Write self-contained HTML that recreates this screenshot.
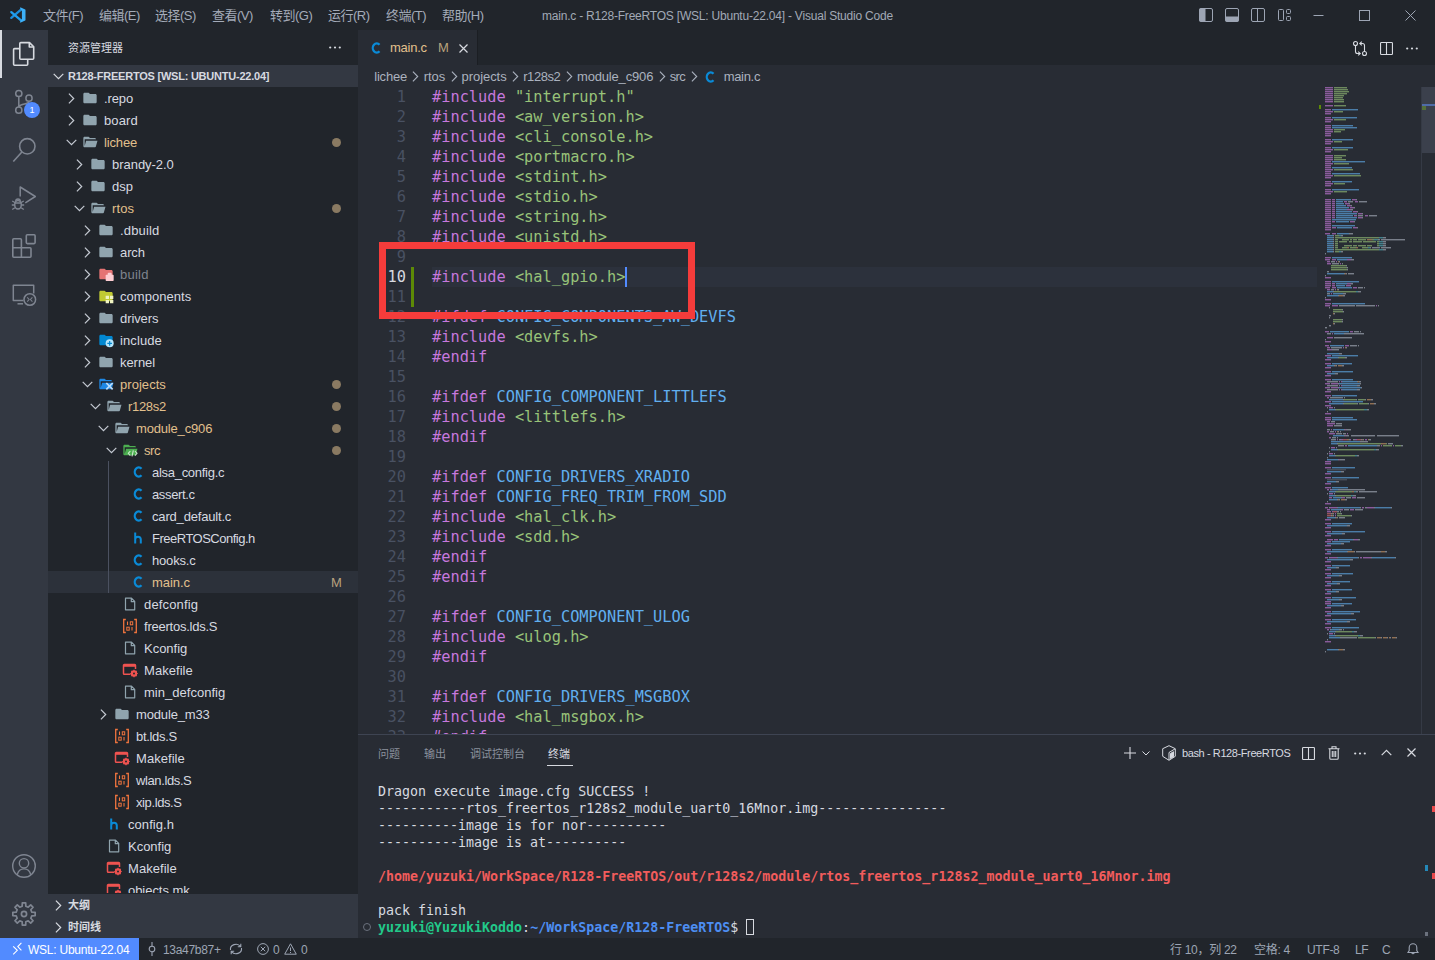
<!DOCTYPE html>
<html lang="zh-CN"><head><meta charset="utf-8"><title>main.c - R128-FreeRTOS [WSL: Ubuntu-22.04] - Visual Studio Code</title>
<style>
*{box-sizing:border-box;margin:0;padding:0}
html,body{width:1435px;height:960px;overflow:hidden;background:#282c34}
body{position:relative;font-family:"Liberation Sans","Noto Sans CJK SC",sans-serif;font-size:13px;color:#d7dae0;-webkit-font-smoothing:antialiased}
.abs{position:absolute}
svg{display:block;overflow:visible}
.ui{letter-spacing:-0.45px;white-space:nowrap}
.mono{font-family:"DejaVu Sans Mono","Liberation Mono",monospace;white-space:pre}
/* title bar */
#title{left:0;top:0;width:1435px;height:30px;background:#21252b;color:#9da5b4}
#title .m{position:absolute;top:0;height:30px;line-height:31px;font-size:13px;letter-spacing:-0.5px;white-space:nowrap;color:#a4abb9}
#title .t{position:absolute;top:0;height:30px;line-height:33px;font-size:12px;left:542px;letter-spacing:-0.21px;white-space:nowrap;color:#a2a9b6}
/* activity bar */
#act{left:0;top:30px;width:48px;height:908px;background:#333842}
/* sidebar */
#side{left:48px;top:30px;width:310px;height:908px;background:#21252b;overflow:hidden}
.row{position:absolute;left:0;width:310px;height:22px;line-height:22px;white-space:nowrap}
.row .lb{position:absolute;top:1px;letter-spacing:-0.45px;color:#d7dae0}
.row.mod .lb{color:#e2c08d}
.row.ign .lb{color:#7f848e}
.row .dot{position:absolute;left:284px;top:7px;width:9px;height:9px;border-radius:50%;background:#8a7a62}
.row svg{position:absolute}
/* editor */
#ed{left:358px;top:30px;width:1077px;height:704px;background:#282c34;overflow:hidden}
.ln{position:absolute;left:0;width:48px;text-align:right;height:20px;line-height:20px;color:#495162;font-size:15.3px}
.cl{position:absolute;left:74px;height:20px;line-height:20px;font-size:15.3px}
.k{color:#c678dd}.s{color:#98c379}.d{color:#61afef}
/* panel */
#panel{left:358px;top:734px;width:1077px;height:204px;background:#282c34;border-top:1px solid #3e4452;overflow:hidden}
.tl{position:absolute;left:20px;height:17px;line-height:19px;font-size:13.3px;color:#d7dae0}
/* status */
#status{left:0;top:938px;width:1435px;height:22px;background:#21252b;color:#9da5b4;font-size:12px}
#status .i{position:absolute;top:0;height:22px;line-height:24px;white-space:nowrap;letter-spacing:-0.3px}
</style></head><body>
<div id="title" class="abs">
<svg class="abs" style="left:10px;top:7px" width="16" height="16" viewBox="0 0 16 16"><path d="M11.300 2.300L1.300 10.900" stroke="#1b8fdc" stroke-width="2.300" stroke-linecap="round"/><path d="M11.300 13.700L1.300 5.100" stroke="#219ff0" stroke-width="2.300" stroke-linecap="round"/><path d="M10.800 0.500L15.200 2.600a.6.600 0 0 1 .3.500V12.900a.6.600 0 0 1-.3.500L10.800 15.500a.8.800 0 0 1-1-.3L11.900 12V4L9.800.8a.8.800 0 0 1 1-.3z" fill="#3db0f7"/></svg>
<div class="m" style="left:43px">文件(F)</div>
<div class="m" style="left:99px">编辑(E)</div>
<div class="m" style="left:155px">选择(S)</div>
<div class="m" style="left:212px">查看(V)</div>
<div class="m" style="left:270px">转到(G)</div>
<div class="m" style="left:328px">运行(R)</div>
<div class="m" style="left:386px">终端(T)</div>
<div class="m" style="left:442px">帮助(H)</div>
<div class="t">main.c - R128-FreeRTOS [WSL: Ubuntu-22.04] - Visual Studio Code</div>
<svg class="abs" style="left:1199px;top:8px" width="14" height="14" viewBox="0 0 14 14"><rect x="0.5" y="0.5" width="13" height="13" rx="1.5" fill="none" stroke="#9da5b4"/><rect x="0.5" y="0.5" width="6" height="13" fill="#9da5b4"/></svg>
<svg class="abs" style="left:1225px;top:8px" width="14" height="14" viewBox="0 0 14 14"><rect x="0.5" y="0.5" width="13" height="13" rx="1.5" fill="none" stroke="#9da5b4"/><rect x="0.5" y="8.5" width="13" height="5" fill="#9da5b4"/></svg>
<svg class="abs" style="left:1251px;top:8px" width="14" height="14" viewBox="0 0 14 14"><rect x="0.5" y="0.5" width="13" height="13" rx="1.5" fill="none" stroke="#9da5b4"/><path d="M6.5 0.5V13.5" stroke="#9da5b4"/></svg>
<svg class="abs" style="left:1278px;top:8px" width="14" height="14" viewBox="0 0 14 14"><rect x="0.5" y="1.5" width="5" height="11" rx="1" fill="none" stroke="#9da5b4"/><rect x="8.5" y="1.5" width="4" height="4" rx="1" fill="none" stroke="#9da5b4"/><rect x="8.5" y="8.5" width="4" height="4" rx="1" fill="none" stroke="#9da5b4"/></svg>
<svg class="abs" style="left:1313px;top:10px" width="11" height="11" viewBox="0 0 11 11"><path d="M0.5 5.5H10.5" stroke="#9da5b4" stroke-width="1"/></svg>
<svg class="abs" style="left:1359px;top:10px" width="11" height="11" viewBox="0 0 11 11"><rect x="0.5" y="0.5" width="10" height="10" fill="none" stroke="#9da5b4" stroke-width="1"/></svg>
<svg class="abs" style="left:1405px;top:10px" width="11" height="11" viewBox="0 0 11 11"><path d="M0.5 0.5L10.5 10.5M10.5 0.5L0.5 10.5" stroke="#9da5b4" stroke-width="1"/></svg>
</div>
<div id="act" class="abs">
<div class="abs" style="left:0;top:0;width:2px;height:48px;background:#d7dae0"></div>
<svg class="abs" style="left:0;top:0" width="48" height="908" viewBox="0 30 48 908" fill="none"><g stroke="#d7dae0" stroke-width="1.600" stroke-linejoin="round"><path d="M19.800 43.600a1 1 0 0 1 1-1H29.500l4.200 4.200V58.200a1 1 0 0 1-1 1H20.800a1 1 0 0 1-1-1Z"/><path d="M29.300 42.800V47h4.200"/><path d="M19.800 48.600H14.600a1 1 0 0 0-1 1V64.200a1 1 0 0 0 1 1H26.700a1 1 0 0 0 1-1V59.200"/></g><g stroke="#7f8591" stroke-width="1.500"><circle cx="18.800" cy="93.500" r="3.100"/><circle cx="18.800" cy="110.200" r="3.100"/><circle cx="29" cy="98.200" r="3.100"/><path d="M18.800 96.600V107.100M29 101.300c0 3.500-8 2-10.200 5.500"/></g><g stroke="#7f8591" stroke-width="1.600"><circle cx="27.300" cy="146.300" r="7.700"/><path d="M21.900 152L13.300 161.500"/></g><g stroke="#7f8591" stroke-width="1.500" stroke-linejoin="round"><path d="M20.200 196.500V187L35.300 196.500L25.300 202.800"/><ellipse cx="18" cy="204.800" rx="3.300" ry="4.300"/><path d="M12.200 201l2.700 1.500M11.800 205h2.900M12.200 209.500l2.700-1.800M23.800 201l-2.700 1.500M24.200 205h-2.900M23.800 209.500l-2.700-1.800M14.800 203h6.400M15.700 201.300a2.300 2.300 0 0 1 4.600 0" stroke-width="1.300"/></g><g stroke="#7f8591" stroke-width="1.600" stroke-linejoin="round"><path d="M13.800 238.800H20.400a1 1 0 0 1 1 1V247.800H30a1 1 0 0 1 1 1V256.200a1 1 0 0 1-1 1H13.800a1 1 0 0 1-1-1V239.800a1 1 0 0 1 1-1ZM12.800 247.800H21.400V257.200"/><rect x="26.300" y="234.800" width="8.800" height="8.800" rx="1"/></g><g stroke="#7f8591" stroke-width="1.500" stroke-linejoin="round"><path d="M23.500 300.500H13.300V285.300H33.700V293.500"/><path d="M17.500 303.800H23"/><circle cx="29.800" cy="299.500" r="5.800"/><path d="M27.200 297.300l2 2.200-2 2.200M32.400 297.300l-2 2.200 2 2.200" stroke-width="1.100"/></g><g stroke="#7f8591" stroke-width="1.400"><circle cx="24" cy="866" r="11.300"/><circle cx="24" cy="863.300" r="4.700"/><path d="M17.200 874.700c1-3.800 3.600-5.800 6.800-5.800s5.800 2 6.800 5.800"/></g><g stroke="#7f8591" stroke-width="1.700" stroke-linejoin="round"><path d="M22.31 902.83L25.69 902.83L25.82 906.21L28.22 907.20L30.71 904.91L33.09 907.29L30.80 909.78L31.79 912.18L35.17 912.31L35.17 915.69L31.79 915.82L30.80 918.22L33.09 920.71L30.71 923.09L28.22 920.80L25.82 921.79L25.69 925.17L22.31 925.17L22.18 921.79L19.78 920.80L17.29 923.09L14.91 920.71L17.20 918.22L16.21 915.82L12.83 915.69L12.83 912.31L16.21 912.18L17.20 909.78L14.91 907.29L17.29 904.91L19.78 907.20L22.18 906.21Z"/><circle cx="24" cy="914" r="2.600"/></g></svg>
<div class="abs" style="left:24px;top:72px;width:16px;height:16px;border-radius:8px;background:#528bff;color:#fff;font-size:9px;line-height:16px;text-align:center">1</div>
</div>
<div id="side" class="abs">
<div class="abs" style="left:20px;top:0;height:35px;line-height:37px;font-size:11px;color:#d7dae0;white-space:nowrap">资源管理器</div>
<svg class="abs" style="left:281px;top:16px" width="12" height="3" viewBox="0 0 12 3"><circle cx="1.200" cy="1.500" r="1.100" fill="#d7dae0"/><circle cx="6" cy="1.500" r="1.100" fill="#d7dae0"/><circle cx="10.800" cy="1.500" r="1.100" fill="#d7dae0"/></svg>
<div class="abs" style="left:0;top:35px;width:310px;height:22px;background:#333842"></div>
<svg class="abs" style="left:4.500px;top:42.500px" width="11" height="7" viewBox="0 0 11 7"><path d="M0.700 0.900L5.500 5.700L10.300 0.900" fill="none" stroke="#d7dae0" stroke-width="1.200"/></svg>
<div class="abs" style="left:20px;top:35px;height:22px;line-height:22px;font-size:11px;font-weight:bold;color:#d7dae0;white-space:nowrap;letter-spacing:-0.231px">R128-FREERTOS [WSL: UBUNTU-22.04]</div>
<div class="abs" style="left:0;top:57px;width:310px;height:806px;overflow:hidden">
<div class="row " style="top:0px">
<svg style="left:20px;top:5.5px" width="7" height="11" viewBox="0 0 7 11"><path d="M0.9 0.7L5.7 5.500L0.9 10.300" fill="none" stroke="#c5cad3" stroke-width="1.2"/></svg>
<svg style="left:34px;top:3px" width="16" height="16" viewBox="0 0 24 24"><path d="M10 4H4c-1.11 0-2 .89-2 2v12c0 1.1.9 2 2 2h16c1.1 0 2-.9 2-2V8c0-1.11-.9-2-2-2h-8l-2-2z" fill="#90a4ae"/></svg>
<span class="lb" style="left:56px;letter-spacing:-0.108px">.repo</span>
</div>
<div class="row " style="top:22px">
<svg style="left:20px;top:5.5px" width="7" height="11" viewBox="0 0 7 11"><path d="M0.9 0.7L5.7 5.500L0.9 10.300" fill="none" stroke="#c5cad3" stroke-width="1.2"/></svg>
<svg style="left:34px;top:3px" width="16" height="16" viewBox="0 0 24 24"><path d="M10 4H4c-1.11 0-2 .89-2 2v12c0 1.1.9 2 2 2h16c1.1 0 2-.9 2-2V8c0-1.11-.9-2-2-2h-8l-2-2z" fill="#90a4ae"/></svg>
<span class="lb" style="left:56px;letter-spacing:0.13px">board</span>
</div>
<div class="row mod" style="top:44px">
<svg style="left:17.5px;top:7.5px" width="11" height="7" viewBox="0 0 11 7"><path d="M0.7 0.9L5.5 5.7L10.3 0.9" fill="none" stroke="#c5cad3" stroke-width="1.2"/></svg>
<svg style="left:34px;top:3px" width="16" height="16" viewBox="0 0 24 24"><path d="M19 20H4c-1.11 0-2-.9-2-2V6c0-1.11.89-2 2-2h6l2 2h7c1.1 0 2 .9 2 2H4v10l2.14-8h17.07l-2.28 8.5c-.23.87-1.01 1.5-1.93 1.5z" fill="#90a4ae"/></svg>
<span class="lb" style="left:56px;letter-spacing:-0.145px">lichee</span>
<span class="dot"></span>
</div>
<div class="row " style="top:66px">
<svg style="left:28px;top:5.5px" width="7" height="11" viewBox="0 0 7 11"><path d="M0.9 0.7L5.7 5.500L0.9 10.300" fill="none" stroke="#c5cad3" stroke-width="1.2"/></svg>
<svg style="left:42px;top:3px" width="16" height="16" viewBox="0 0 24 24"><path d="M10 4H4c-1.11 0-2 .89-2 2v12c0 1.1.9 2 2 2h16c1.1 0 2-.9 2-2V8c0-1.11-.9-2-2-2h-8l-2-2z" fill="#90a4ae"/></svg>
<span class="lb" style="left:64px;letter-spacing:-0.036px">brandy-2.0</span>
</div>
<div class="row " style="top:88px">
<svg style="left:28px;top:5.5px" width="7" height="11" viewBox="0 0 7 11"><path d="M0.9 0.7L5.7 5.500L0.9 10.300" fill="none" stroke="#c5cad3" stroke-width="1.2"/></svg>
<svg style="left:42px;top:3px" width="16" height="16" viewBox="0 0 24 24"><path d="M10 4H4c-1.11 0-2 .89-2 2v12c0 1.1.9 2 2 2h16c1.1 0 2-.9 2-2V8c0-1.11-.9-2-2-2h-8l-2-2z" fill="#90a4ae"/></svg>
<span class="lb" style="left:64px;letter-spacing:-0.023px">dsp</span>
</div>
<div class="row mod" style="top:110px">
<svg style="left:25.5px;top:7.5px" width="11" height="7" viewBox="0 0 11 7"><path d="M0.7 0.9L5.5 5.7L10.3 0.9" fill="none" stroke="#c5cad3" stroke-width="1.2"/></svg>
<svg style="left:42px;top:3px" width="16" height="16" viewBox="0 0 24 24"><path d="M19 20H4c-1.11 0-2-.9-2-2V6c0-1.11.89-2 2-2h6l2 2h7c1.1 0 2 .9 2 2H4v10l2.14-8h17.07l-2.28 8.5c-.23.87-1.01 1.5-1.93 1.5z" fill="#90a4ae"/></svg>
<span class="lb" style="left:64px;letter-spacing:0.107px">rtos</span>
<span class="dot"></span>
</div>
<div class="row " style="top:132px">
<svg style="left:36px;top:5.5px" width="7" height="11" viewBox="0 0 7 11"><path d="M0.9 0.7L5.7 5.500L0.9 10.300" fill="none" stroke="#c5cad3" stroke-width="1.2"/></svg>
<svg style="left:50px;top:3px" width="16" height="16" viewBox="0 0 24 24"><path d="M10 4H4c-1.11 0-2 .89-2 2v12c0 1.1.9 2 2 2h16c1.1 0 2-.9 2-2V8c0-1.11-.9-2-2-2h-8l-2-2z" fill="#90a4ae"/></svg>
<span class="lb" style="left:72px;letter-spacing:0.155px">.dbuild</span>
</div>
<div class="row " style="top:154px">
<svg style="left:36px;top:5.5px" width="7" height="11" viewBox="0 0 7 11"><path d="M0.9 0.7L5.7 5.500L0.9 10.300" fill="none" stroke="#c5cad3" stroke-width="1.2"/></svg>
<svg style="left:50px;top:3px" width="16" height="16" viewBox="0 0 24 24"><path d="M10 4H4c-1.11 0-2 .89-2 2v12c0 1.1.9 2 2 2h16c1.1 0 2-.9 2-2V8c0-1.11-.9-2-2-2h-8l-2-2z" fill="#90a4ae"/></svg>
<span class="lb" style="left:72px;letter-spacing:-0.099px">arch</span>
</div>
<div class="row ign" style="top:176px">
<svg style="left:36px;top:5.5px" width="7" height="11" viewBox="0 0 7 11"><path d="M0.9 0.7L5.7 5.500L0.9 10.300" fill="none" stroke="#c5cad3" stroke-width="1.2"/></svg>
<svg style="left:50px;top:3px" width="16" height="16" viewBox="0 0 24 24"><path d="M10 4H4c-1.11 0-2 .89-2 2v12c0 1.1.9 2 2 2h16c1.1 0 2-.9 2-2V8c0-1.11-.9-2-2-2h-8l-2-2z" fill="#e57373"/><path d="M12.500 13h2v-1.500a1.500 1.500 0 0 1 1.500-1.500h3a1.500 1.500 0 0 1 1.500 1.500V13h2a1 1 0 0 1 1 1v7.500a1 1 0 0 1-1 1h-10a1 1 0 0 1-1-1V14a1 1 0 0 1 1-1z" fill="#ffcdd2"/></svg>
<span class="lb" style="left:72px;letter-spacing:0.226px">build</span>
</div>
<div class="row " style="top:198px">
<svg style="left:36px;top:5.5px" width="7" height="11" viewBox="0 0 7 11"><path d="M0.9 0.7L5.7 5.500L0.9 10.300" fill="none" stroke="#c5cad3" stroke-width="1.2"/></svg>
<svg style="left:50px;top:3px" width="16" height="16" viewBox="0 0 24 24"><path d="M10 4H4c-1.11 0-2 .89-2 2v12c0 1.1.9 2 2 2h16c1.1 0 2-.9 2-2V8c0-1.11-.9-2-2-2h-8l-2-2z" fill="#c0ca33"/><path d="M11.500 11.500h5v5h-5zM18 11.500h5v5h-5zM11.500 18h5v5h-5zM18 18h5v5h-5z" fill="#f0f4c3"/></svg>
<span class="lb" style="left:72px;letter-spacing:0.047px">components</span>
</div>
<div class="row " style="top:220px">
<svg style="left:36px;top:5.5px" width="7" height="11" viewBox="0 0 7 11"><path d="M0.9 0.7L5.7 5.500L0.9 10.300" fill="none" stroke="#c5cad3" stroke-width="1.2"/></svg>
<svg style="left:50px;top:3px" width="16" height="16" viewBox="0 0 24 24"><path d="M10 4H4c-1.11 0-2 .89-2 2v12c0 1.1.9 2 2 2h16c1.1 0 2-.9 2-2V8c0-1.11-.9-2-2-2h-8l-2-2z" fill="#90a4ae"/></svg>
<span class="lb" style="left:72px;letter-spacing:-0.088px">drivers</span>
</div>
<div class="row " style="top:242px">
<svg style="left:36px;top:5.5px" width="7" height="11" viewBox="0 0 7 11"><path d="M0.9 0.7L5.7 5.500L0.9 10.300" fill="none" stroke="#c5cad3" stroke-width="1.2"/></svg>
<svg style="left:50px;top:3px" width="16" height="16" viewBox="0 0 24 24"><path d="M10 4H4c-1.11 0-2 .89-2 2v12c0 1.1.9 2 2 2h16c1.1 0 2-.9 2-2V8c0-1.11-.9-2-2-2h-8l-2-2z" fill="#0288d1"/><circle cx="17.500" cy="17" r="6" fill="#b3e5fc"/><path d="M17.500 13.500v7M14 17h7" stroke="#0288d1" stroke-width="1.800"/></svg>
<span class="lb" style="left:72px;letter-spacing:0.1px">include</span>
</div>
<div class="row " style="top:264px">
<svg style="left:36px;top:5.5px" width="7" height="11" viewBox="0 0 7 11"><path d="M0.9 0.7L5.7 5.500L0.9 10.300" fill="none" stroke="#c5cad3" stroke-width="1.2"/></svg>
<svg style="left:50px;top:3px" width="16" height="16" viewBox="0 0 24 24"><path d="M10 4H4c-1.11 0-2 .89-2 2v12c0 1.1.9 2 2 2h16c1.1 0 2-.9 2-2V8c0-1.11-.9-2-2-2h-8l-2-2z" fill="#90a4ae"/></svg>
<span class="lb" style="left:72px;letter-spacing:-0.054px">kernel</span>
</div>
<div class="row mod" style="top:286px">
<svg style="left:33.5px;top:7.5px" width="11" height="7" viewBox="0 0 11 7"><path d="M0.7 0.9L5.5 5.7L10.3 0.9" fill="none" stroke="#c5cad3" stroke-width="1.2"/></svg>
<svg style="left:50px;top:3px" width="16" height="16" viewBox="0 0 24 24"><path d="M19 20H4c-1.11 0-2-.9-2-2V6c0-1.11.89-2 2-2h6l2 2h7c1.1 0 2 .9 2 2H4v10l2.14-8h17.07l-2.28 8.5c-.23.87-1.01 1.5-1.93 1.5z" fill="#1e88e5"/><path d="M12.500 10.500l9.500 9.500M22 10.500L12.500 20" stroke="#bbdefb" stroke-width="2.600"/></svg>
<span class="lb" style="left:72px;letter-spacing:0.046px">projects</span>
<span class="dot"></span>
</div>
<div class="row mod" style="top:308px">
<svg style="left:41.5px;top:7.5px" width="11" height="7" viewBox="0 0 11 7"><path d="M0.7 0.9L5.5 5.7L10.3 0.9" fill="none" stroke="#c5cad3" stroke-width="1.2"/></svg>
<svg style="left:58px;top:3px" width="16" height="16" viewBox="0 0 24 24"><path d="M19 20H4c-1.11 0-2-.9-2-2V6c0-1.11.89-2 2-2h6l2 2h7c1.1 0 2 .9 2 2H4v10l2.14-8h17.07l-2.28 8.5c-.23.87-1.01 1.5-1.93 1.5z" fill="#90a4ae"/></svg>
<span class="lb" style="left:80px;letter-spacing:-0.308px">r128s2</span>
<span class="dot"></span>
</div>
<div class="row mod" style="top:330px">
<svg style="left:49.5px;top:7.5px" width="11" height="7" viewBox="0 0 11 7"><path d="M0.7 0.9L5.5 5.7L10.3 0.9" fill="none" stroke="#c5cad3" stroke-width="1.2"/></svg>
<svg style="left:66px;top:3px" width="16" height="16" viewBox="0 0 24 24"><path d="M19 20H4c-1.11 0-2-.9-2-2V6c0-1.11.89-2 2-2h6l2 2h7c1.1 0 2 .9 2 2H4v10l2.14-8h17.07l-2.28 8.5c-.23.87-1.01 1.5-1.93 1.5z" fill="#90a4ae"/></svg>
<span class="lb" style="left:88px;letter-spacing:-0.169px">module_c906</span>
<span class="dot"></span>
</div>
<div class="row mod" style="top:352px">
<svg style="left:57.5px;top:7.5px" width="11" height="7" viewBox="0 0 11 7"><path d="M0.7 0.9L5.5 5.7L10.3 0.9" fill="none" stroke="#c5cad3" stroke-width="1.2"/></svg>
<svg style="left:74px;top:3px" width="16" height="16" viewBox="0 0 24 24"><path d="M19 20H4c-1.11 0-2-.9-2-2V6c0-1.11.89-2 2-2h6l2 2h7c1.1 0 2 .9 2 2H4v10l2.14-8h17.07l-2.28 8.5c-.23.87-1.01 1.5-1.93 1.5z" fill="#4caf50"/><path d="M12.500 13.500L9.500 17l3 3.500M19.500 13.500l3 3.500-3 3.500M17 12.500l-2 9" stroke="#c8e6c9" stroke-width="1.700" fill="none"/></svg>
<span class="lb" style="left:96px;letter-spacing:-0.448px">src</span>
<span class="dot"></span>
</div>
<div class="row " style="top:374px">
<svg style="left:82px;top:3px" width="16" height="16" viewBox="0 0 16 16"><path d="M11.500 4.800A3.900 4.600 0 1 0 11.500 11.200" fill="none" stroke="#0a8ad6" stroke-width="2.300"/></svg>
<span class="lb" style="left:104px;letter-spacing:-0.284px">alsa_config.c</span>
</div>
<div class="row " style="top:396px">
<svg style="left:82px;top:3px" width="16" height="16" viewBox="0 0 16 16"><path d="M11.500 4.800A3.900 4.600 0 1 0 11.500 11.200" fill="none" stroke="#0a8ad6" stroke-width="2.300"/></svg>
<span class="lb" style="left:104px;letter-spacing:-0.364px">assert.c</span>
</div>
<div class="row " style="top:418px">
<svg style="left:82px;top:3px" width="16" height="16" viewBox="0 0 16 16"><path d="M11.500 4.800A3.900 4.600 0 1 0 11.500 11.200" fill="none" stroke="#0a8ad6" stroke-width="2.300"/></svg>
<span class="lb" style="left:104px;letter-spacing:-0.177px">card_default.c</span>
</div>
<div class="row " style="top:440px">
<svg style="left:82px;top:3px" width="16" height="16" viewBox="0 0 16 16"><path d="M5.200 2.500V13.500M5.200 9.500a2.800 2.800 0 0 1 5.600 0V13.500" fill="none" stroke="#0a8ad6" stroke-width="2"/></svg>
<span class="lb" style="left:104px;letter-spacing:-0.5px">FreeRTOSConfig.h</span>
</div>
<div class="row " style="top:462px">
<svg style="left:82px;top:3px" width="16" height="16" viewBox="0 0 16 16"><path d="M11.500 4.800A3.900 4.600 0 1 0 11.500 11.200" fill="none" stroke="#0a8ad6" stroke-width="2.300"/></svg>
<span class="lb" style="left:104px;letter-spacing:-0.173px">hooks.c</span>
</div>
<div class="row mod sel" style="top:484px;background:#2c313a">
<svg style="left:82px;top:3px" width="16" height="16" viewBox="0 0 16 16"><path d="M11.500 4.800A3.900 4.600 0 1 0 11.500 11.200" fill="none" stroke="#0a8ad6" stroke-width="2.300"/></svg>
<span class="lb" style="left:104px;letter-spacing:-0.066px">main.c</span>
<span class="lb" style="left:283px;color:#b9a27e;letter-spacing:0">M</span>
</div>
<div class="row " style="top:506px">
<svg style="left:74px;top:3px" width="16" height="16" viewBox="0 0 16 16"><path d="M3.500 2.200h6l3.200 3.200v8.400h-9.200zM9.300 2.400v3.300h3.300" fill="none" stroke="#90a4ae" stroke-width="1.200" stroke-linejoin="round"/></svg>
<span class="lb" style="left:96px;letter-spacing:0.159px">defconfig</span>
</div>
<div class="row " style="top:528px">
<svg style="left:74px;top:3px" width="16" height="16" viewBox="0 0 16 16"><path d="M3.800 1.500H1.700V14.500H3.800M12.200 1.500H14.300V14.500H12.200" fill="none" stroke="#f0743e" stroke-width="1.300"/><path d="M5.500 3.500V7" stroke="#f0743e" stroke-width="1.100"/><rect x="8.300" y="3.800" width="2.400" height="3" fill="none" stroke="#f0743e" stroke-width="1"/><rect x="4.800" y="9.200" width="2.400" height="3" fill="none" stroke="#f0743e" stroke-width="1"/><path d="M10 9V12.500" stroke="#f0743e" stroke-width="1.100"/></svg>
<span class="lb" style="left:96px;letter-spacing:-0.235px">freertos.lds.S</span>
</div>
<div class="row " style="top:550px">
<svg style="left:74px;top:3px" width="16" height="16" viewBox="0 0 16 16"><path d="M3.500 2.200h6l3.200 3.200v8.400h-9.200zM9.300 2.400v3.300h3.300" fill="none" stroke="#90a4ae" stroke-width="1.200" stroke-linejoin="round"/></svg>
<span class="lb" style="left:96px;letter-spacing:-0.011px">Kconfig</span>
</div>
<div class="row " style="top:572px">
<svg style="left:74px;top:3px" width="16" height="16" viewBox="0 0 16 16"><path d="M8.500 12.200H2.300a.8.8 0 0 1-.8-.8V3.300a.8.8 0 0 1 .8-.8h10.400a.8.8 0 0 1 .8.8V7" fill="none" stroke="#ef5350" stroke-width="1.500"/><path d="M1.500 3h12v1.800h-12z" fill="#ef5350"/><circle cx="12" cy="11.500" r="2.300" fill="none" stroke="#ef5350" stroke-width="1.800"/><path d="M12 7.800v7.400M8.300 11.500h7.400M9.400 8.900l5.200 5.200M14.600 8.900L9.400 14.100" stroke="#ef5350" stroke-width="1.200"/><circle cx="12" cy="11.500" r="1" fill="#21252b"/></svg>
<span class="lb" style="left:96px;letter-spacing:0.047px">Makefile</span>
</div>
<div class="row " style="top:594px">
<svg style="left:74px;top:3px" width="16" height="16" viewBox="0 0 16 16"><path d="M3.500 2.200h6l3.200 3.200v8.400h-9.200zM9.300 2.400v3.300h3.300" fill="none" stroke="#90a4ae" stroke-width="1.200" stroke-linejoin="round"/></svg>
<span class="lb" style="left:96px;letter-spacing:0.027px">min_defconfig</span>
</div>
<div class="row " style="top:616px">
<svg style="left:52px;top:5.5px" width="7" height="11" viewBox="0 0 7 11"><path d="M0.9 0.7L5.7 5.500L0.9 10.300" fill="none" stroke="#c5cad3" stroke-width="1.2"/></svg>
<svg style="left:66px;top:3px" width="16" height="16" viewBox="0 0 24 24"><path d="M10 4H4c-1.11 0-2 .89-2 2v12c0 1.1.9 2 2 2h16c1.1 0 2-.9 2-2V8c0-1.11-.9-2-2-2h-8l-2-2z" fill="#90a4ae"/></svg>
<span class="lb" style="left:88px;letter-spacing:-0.146px">module_m33</span>
</div>
<div class="row " style="top:638px">
<svg style="left:66px;top:3px" width="16" height="16" viewBox="0 0 16 16"><path d="M3.800 1.500H1.700V14.500H3.800M12.200 1.500H14.300V14.500H12.200" fill="none" stroke="#f0743e" stroke-width="1.300"/><path d="M5.500 3.500V7" stroke="#f0743e" stroke-width="1.100"/><rect x="8.300" y="3.800" width="2.400" height="3" fill="none" stroke="#f0743e" stroke-width="1"/><rect x="4.800" y="9.200" width="2.400" height="3" fill="none" stroke="#f0743e" stroke-width="1"/><path d="M10 9V12.500" stroke="#f0743e" stroke-width="1.100"/></svg>
<span class="lb" style="left:88px;letter-spacing:-0.307px">bt.lds.S</span>
</div>
<div class="row " style="top:660px">
<svg style="left:66px;top:3px" width="16" height="16" viewBox="0 0 16 16"><path d="M8.500 12.200H2.300a.8.8 0 0 1-.8-.8V3.300a.8.8 0 0 1 .8-.8h10.400a.8.8 0 0 1 .8.8V7" fill="none" stroke="#ef5350" stroke-width="1.500"/><path d="M1.500 3h12v1.800h-12z" fill="#ef5350"/><circle cx="12" cy="11.500" r="2.300" fill="none" stroke="#ef5350" stroke-width="1.800"/><path d="M12 7.800v7.400M8.300 11.500h7.400M9.400 8.900l5.200 5.200M14.600 8.900L9.400 14.100" stroke="#ef5350" stroke-width="1.200"/><circle cx="12" cy="11.500" r="1" fill="#21252b"/></svg>
<span class="lb" style="left:88px;letter-spacing:0.047px">Makefile</span>
</div>
<div class="row " style="top:682px">
<svg style="left:66px;top:3px" width="16" height="16" viewBox="0 0 16 16"><path d="M3.800 1.500H1.700V14.500H3.800M12.200 1.500H14.300V14.500H12.200" fill="none" stroke="#f0743e" stroke-width="1.300"/><path d="M5.500 3.500V7" stroke="#f0743e" stroke-width="1.100"/><rect x="8.300" y="3.800" width="2.400" height="3" fill="none" stroke="#f0743e" stroke-width="1"/><rect x="4.800" y="9.200" width="2.400" height="3" fill="none" stroke="#f0743e" stroke-width="1"/><path d="M10 9V12.500" stroke="#f0743e" stroke-width="1.100"/></svg>
<span class="lb" style="left:88px;letter-spacing:-0.385px">wlan.lds.S</span>
</div>
<div class="row " style="top:704px">
<svg style="left:66px;top:3px" width="16" height="16" viewBox="0 0 16 16"><path d="M3.800 1.500H1.700V14.500H3.800M12.200 1.500H14.300V14.500H12.200" fill="none" stroke="#f0743e" stroke-width="1.300"/><path d="M5.500 3.500V7" stroke="#f0743e" stroke-width="1.100"/><rect x="8.300" y="3.800" width="2.400" height="3" fill="none" stroke="#f0743e" stroke-width="1"/><rect x="4.800" y="9.200" width="2.400" height="3" fill="none" stroke="#f0743e" stroke-width="1"/><path d="M10 9V12.500" stroke="#f0743e" stroke-width="1.100"/></svg>
<span class="lb" style="left:88px;letter-spacing:-0.393px">xip.lds.S</span>
</div>
<div class="row " style="top:726px">
<svg style="left:58px;top:3px" width="16" height="16" viewBox="0 0 16 16"><path d="M5.200 2.500V13.500M5.200 9.500a2.800 2.800 0 0 1 5.600 0V13.500" fill="none" stroke="#0a8ad6" stroke-width="2"/></svg>
<span class="lb" style="left:80px;letter-spacing:0.069px">config.h</span>
</div>
<div class="row " style="top:748px">
<svg style="left:58px;top:3px" width="16" height="16" viewBox="0 0 16 16"><path d="M3.500 2.200h6l3.200 3.200v8.400h-9.200zM9.300 2.400v3.300h3.300" fill="none" stroke="#90a4ae" stroke-width="1.200" stroke-linejoin="round"/></svg>
<span class="lb" style="left:80px;letter-spacing:-0.011px">Kconfig</span>
</div>
<div class="row " style="top:770px">
<svg style="left:58px;top:3px" width="16" height="16" viewBox="0 0 16 16"><path d="M8.500 12.200H2.300a.8.8 0 0 1-.8-.8V3.300a.8.8 0 0 1 .8-.8h10.400a.8.8 0 0 1 .8.8V7" fill="none" stroke="#ef5350" stroke-width="1.500"/><path d="M1.500 3h12v1.800h-12z" fill="#ef5350"/><circle cx="12" cy="11.500" r="2.300" fill="none" stroke="#ef5350" stroke-width="1.800"/><path d="M12 7.800v7.400M8.300 11.500h7.400M9.400 8.900l5.200 5.200M14.600 8.900L9.400 14.100" stroke="#ef5350" stroke-width="1.200"/><circle cx="12" cy="11.500" r="1" fill="#21252b"/></svg>
<span class="lb" style="left:80px;letter-spacing:0.047px">Makefile</span>
</div>
<div class="row " style="top:792px">
<svg style="left:58px;top:3px" width="16" height="16" viewBox="0 0 16 16"><path d="M8.500 12.200H2.300a.8.8 0 0 1-.8-.8V3.300a.8.8 0 0 1 .8-.8h10.400a.8.8 0 0 1 .8.8V7" fill="none" stroke="#ef5350" stroke-width="1.500"/><path d="M1.500 3h12v1.800h-12z" fill="#ef5350"/><circle cx="12" cy="11.500" r="2.300" fill="none" stroke="#ef5350" stroke-width="1.800"/><path d="M12 7.800v7.400M8.300 11.500h7.400M9.400 8.900l5.200 5.200M14.600 8.900L9.400 14.100" stroke="#ef5350" stroke-width="1.200"/><circle cx="12" cy="11.500" r="1" fill="#21252b"/></svg>
<span class="lb" style="left:80px;letter-spacing:-0.044px">objects.mk</span>
</div>
<div class="abs" style="left:60px;top:374px;width:1px;height:132px;background:#4b5160"></div>
</div>
<div class="abs" style="left:0;top:864px;width:310px;height:22px;background:#333842"></div>
<svg class="abs" style="left:6.700px;top:869.5px" width="7" height="11" viewBox="0 0 7 11"><path d="M0.900 0.700L5.700 5.500L0.900 10.300" fill="none" stroke="#d7dae0" stroke-width="1.200"/></svg>
<div class="abs" style="left:20px;top:864px;height:22px;line-height:22px;font-size:11px;font-weight:bold;color:#d7dae0;white-space:nowrap">大纲</div>
<div class="abs" style="left:0;top:886px;width:310px;height:22px;background:#333842"></div>
<svg class="abs" style="left:6.700px;top:891.5px" width="7" height="11" viewBox="0 0 7 11"><path d="M0.900 0.700L5.700 5.500L0.900 10.300" fill="none" stroke="#d7dae0" stroke-width="1.200"/></svg>
<div class="abs" style="left:20px;top:886px;height:22px;line-height:22px;font-size:11px;font-weight:bold;color:#d7dae0;white-space:nowrap">时间线</div>
</div>
<div id="ed" class="abs">
<div class="abs" style="left:0;top:0;width:1077px;height:35px;background:#21252b"></div>
<div class="abs" style="left:0;top:0;width:119px;height:35px;background:#282c34"></div>
<div class="abs" style="left:119px;top:0;width:1px;height:35px;background:#1b1e23"></div>
<svg class="abs" style="left:10px;top:10px" width="16" height="16" viewBox="0 0 16 16"><path d="M11.500 4.800A3.900 4.600 0 1 0 11.500 11.200" fill="none" stroke="#0a8ad6" stroke-width="2.300"/></svg>
<div class="abs ui" style="left:32px;top:0;height:35px;line-height:36px;color:#e2c08d;letter-spacing:-0.233px">main.c</div>
<div class="abs" style="left:80px;top:0;height:35px;line-height:36px;color:#b8a37c;font-size:13px">M</div>
<svg class="abs" style="left:101px;top:14px" width="9" height="9" viewBox="0 0 9 9"><path d="M0.500 0.500L8.500 8.500M8.500 0.500L0.500 8.500" stroke="#d7dae0" stroke-width="1.200"/></svg>
<svg class="abs" style="left:995px;top:11px" width="14" height="15" viewBox="0 0 14 15" fill="none" stroke="#d7dae0" stroke-width="1.100"><circle cx="2.500" cy="2.500" r="2"/><circle cx="11.500" cy="12.500" r="2"/><path d="M2.500 4.300V10.500a2 2 0 0 0 2 2H7M5.200 10.700L7.200 12.500L5.200 14.300M11.500 10.700V4.500a2 2 0 0 0-2-2H7M8.800 0.700L6.800 2.500L8.800 4.300"/></svg>
<svg class="abs" style="left:1022px;top:11.500px" width="13" height="13" viewBox="0 0 13 13" fill="none" stroke="#d7dae0" stroke-width="1.100"><rect x="0.550" y="0.550" width="11.900" height="11.900" rx="0.800"/><path d="M6.500 0.500V12.500"/></svg>
<svg class="abs" style="left:1048px;top:16.500px" width="12" height="3" viewBox="0 0 12 3"><circle cx="1.200" cy="1.500" r="1.100" fill="#d7dae0"/><circle cx="6" cy="1.500" r="1.100" fill="#d7dae0"/><circle cx="10.800" cy="1.500" r="1.100" fill="#d7dae0"/></svg>
<div class="abs ui" style="left:16.2px;top:35px;height:22px;line-height:23px;color:#abb2bf;letter-spacing:-0.178px">lichee</div>
<div class="abs ui" style="left:65.7px;top:35px;height:22px;line-height:23px;color:#abb2bf;letter-spacing:-0.018px">rtos</div>
<div class="abs ui" style="left:103.6px;top:35px;height:22px;line-height:23px;color:#abb2bf;letter-spacing:-0.066px">projects</div>
<div class="abs ui" style="left:165.2px;top:35px;height:22px;line-height:23px;color:#abb2bf;letter-spacing:-0.425px">r128s2</div>
<div class="abs ui" style="left:219.0px;top:35px;height:22px;line-height:23px;color:#abb2bf;letter-spacing:-0.169px">module_c906</div>
<div class="abs ui" style="left:311.8px;top:35px;height:22px;line-height:23px;color:#abb2bf;letter-spacing:-0.715px">src</div>
<div class="abs ui" style="left:365.7px;top:35px;height:22px;line-height:23px;color:#abb2bf;letter-spacing:-0.316px">main.c</div>
<svg class="abs" style="left:54.4px;top:41px" width="7" height="11" viewBox="0 0 7 11"><path d="M0.900 0.700L5.700 5.500L0.900 10.300" fill="none" stroke="#abb2bf" stroke-width="1.100"/></svg>
<svg class="abs" style="left:92.5px;top:41px" width="7" height="11" viewBox="0 0 7 11"><path d="M0.900 0.700L5.700 5.500L0.900 10.300" fill="none" stroke="#abb2bf" stroke-width="1.100"/></svg>
<svg class="abs" style="left:154.3px;top:41px" width="7" height="11" viewBox="0 0 7 11"><path d="M0.900 0.700L5.700 5.500L0.900 10.300" fill="none" stroke="#abb2bf" stroke-width="1.100"/></svg>
<svg class="abs" style="left:207.9px;top:41px" width="7" height="11" viewBox="0 0 7 11"><path d="M0.900 0.700L5.700 5.500L0.900 10.300" fill="none" stroke="#abb2bf" stroke-width="1.100"/></svg>
<svg class="abs" style="left:300.5px;top:41px" width="7" height="11" viewBox="0 0 7 11"><path d="M0.900 0.700L5.700 5.500L0.900 10.300" fill="none" stroke="#abb2bf" stroke-width="1.100"/></svg>
<svg class="abs" style="left:332.5px;top:41px" width="7" height="11" viewBox="0 0 7 11"><path d="M0.900 0.700L5.700 5.500L0.900 10.300" fill="none" stroke="#abb2bf" stroke-width="1.100"/></svg>
<svg class="abs" style="left:343.500px;top:38.500px" width="16" height="16" viewBox="0 0 16 16"><path d="M11.500 4.800A3.900 4.600 0 1 0 11.500 11.200" fill="none" stroke="#0a8ad6" stroke-width="2.300"/></svg>
<div class="abs" style="left:74px;top:237px;width:885px;height:20px;background:#2c313c"></div>
<div class="ln mono" style="top:57px">1</div>
<div class="cl mono" style="top:57px"><span class="k">#include</span> <span class="s">&quot;interrupt.h&quot;</span></div>
<div class="ln mono" style="top:77px">2</div>
<div class="cl mono" style="top:77px"><span class="k">#include</span> <span class="s">&lt;aw_version.h&gt;</span></div>
<div class="ln mono" style="top:97px">3</div>
<div class="cl mono" style="top:97px"><span class="k">#include</span> <span class="s">&lt;cli_console.h&gt;</span></div>
<div class="ln mono" style="top:117px">4</div>
<div class="cl mono" style="top:117px"><span class="k">#include</span> <span class="s">&lt;portmacro.h&gt;</span></div>
<div class="ln mono" style="top:137px">5</div>
<div class="cl mono" style="top:137px"><span class="k">#include</span> <span class="s">&lt;stdint.h&gt;</span></div>
<div class="ln mono" style="top:157px">6</div>
<div class="cl mono" style="top:157px"><span class="k">#include</span> <span class="s">&lt;stdio.h&gt;</span></div>
<div class="ln mono" style="top:177px">7</div>
<div class="cl mono" style="top:177px"><span class="k">#include</span> <span class="s">&lt;string.h&gt;</span></div>
<div class="ln mono" style="top:197px">8</div>
<div class="cl mono" style="top:197px"><span class="k">#include</span> <span class="s">&lt;unistd.h&gt;</span></div>
<div class="ln mono" style="top:217px">9</div>
<div class="ln mono" style="top:237px;color:#d7dae0">10</div>
<div class="cl mono" style="top:237px"><span class="k">#include</span> <span class="s">&lt;hal_gpio.h&gt;</span></div>
<div class="ln mono" style="top:257px">11</div>
<div class="ln mono" style="top:277px">12</div>
<div class="cl mono" style="top:277px"><span class="k">#ifdef</span> <span class="d">CONFIG_COMPONENTS_AW_DEVFS</span></div>
<div class="ln mono" style="top:297px">13</div>
<div class="cl mono" style="top:297px"><span class="k">#include</span> <span class="s">&lt;devfs.h&gt;</span></div>
<div class="ln mono" style="top:317px">14</div>
<div class="cl mono" style="top:317px"><span class="k">#endif</span></div>
<div class="ln mono" style="top:337px">15</div>
<div class="ln mono" style="top:357px">16</div>
<div class="cl mono" style="top:357px"><span class="k">#ifdef</span> <span class="d">CONFIG_COMPONENT_LITTLEFS</span></div>
<div class="ln mono" style="top:377px">17</div>
<div class="cl mono" style="top:377px"><span class="k">#include</span> <span class="s">&lt;littlefs.h&gt;</span></div>
<div class="ln mono" style="top:397px">18</div>
<div class="cl mono" style="top:397px"><span class="k">#endif</span></div>
<div class="ln mono" style="top:417px">19</div>
<div class="ln mono" style="top:437px">20</div>
<div class="cl mono" style="top:437px"><span class="k">#ifdef</span> <span class="d">CONFIG_DRIVERS_XRADIO</span></div>
<div class="ln mono" style="top:457px">21</div>
<div class="cl mono" style="top:457px"><span class="k">#ifdef</span> <span class="d">CONFIG_FREQ_TRIM_FROM_SDD</span></div>
<div class="ln mono" style="top:477px">22</div>
<div class="cl mono" style="top:477px"><span class="k">#include</span> <span class="s">&lt;hal_clk.h&gt;</span></div>
<div class="ln mono" style="top:497px">23</div>
<div class="cl mono" style="top:497px"><span class="k">#include</span> <span class="s">&lt;sdd.h&gt;</span></div>
<div class="ln mono" style="top:517px">24</div>
<div class="cl mono" style="top:517px"><span class="k">#endif</span></div>
<div class="ln mono" style="top:537px">25</div>
<div class="cl mono" style="top:537px"><span class="k">#endif</span></div>
<div class="ln mono" style="top:557px">26</div>
<div class="ln mono" style="top:577px">27</div>
<div class="cl mono" style="top:577px"><span class="k">#ifdef</span> <span class="d">CONFIG_COMPONENT_ULOG</span></div>
<div class="ln mono" style="top:597px">28</div>
<div class="cl mono" style="top:597px"><span class="k">#include</span> <span class="s">&lt;ulog.h&gt;</span></div>
<div class="ln mono" style="top:617px">29</div>
<div class="cl mono" style="top:617px"><span class="k">#endif</span></div>
<div class="ln mono" style="top:637px">30</div>
<div class="ln mono" style="top:657px">31</div>
<div class="cl mono" style="top:657px"><span class="k">#ifdef</span> <span class="d">CONFIG_DRIVERS_MSGBOX</span></div>
<div class="ln mono" style="top:677px">32</div>
<div class="cl mono" style="top:677px"><span class="k">#include</span> <span class="s">&lt;hal_msgbox.h&gt;</span></div>
<div class="ln mono" style="top:697px">33</div>
<div class="cl mono" style="top:697px"><span class="k">#endif</span></div>
<div class="abs" style="left:53px;top:237px;width:3px;height:40px;background:#5d8a06"></div>
<div class="abs" style="left:267px;top:237px;width:2px;height:20px;background:#528bff"></div>
<div class="abs" style="left:21px;top:212px;width:316px;height:77px;border:7px solid #f53c3b"></div>
<svg class="abs" style="left:967px;top:57px" width="96" height="570" viewBox="0 0 96 570" fill="none" stroke-width="1" shape-rendering="crispEdges"><g opacity="0.62"><path stroke="#c678dd" d="M0 0.5h8M0 2.5h8M0 4.5h8M0 6.5h8M0 8.5h8M0 10.5h8M0 12.5h8M0 14.5h8M0 18.5h8M0 22.5h6M0 24.5h8M0 26.5h6M0 30.5h6M0 32.5h8M0 34.5h6M0 38.5h6M0 40.5h6M0 42.5h8M0 44.5h8M0 46.5h6M0 48.5h6M0 52.5h6M0 54.5h8M0 56.5h6M0 60.5h6M0 62.5h8M0 64.5h6M0 68.5h8M0 70.5h8M0 72.5h8M0 74.5h6M0 76.5h8M0 78.5h6M0 80.5h6M0 82.5h8M0 84.5h6M0 86.5h6M0 88.5h8M0 90.5h6M0 94.5h6M0 96.5h8M0 98.5h6M0 102.5h6M0 104.5h8M0 106.5h6M0 112.5h6M7 112.5h3M27 112.5h4M0 114.5h6M7 114.5h3M19 114.5h3M30 114.5h3M0 116.5h6M7 116.5h3M20 116.5h4M0 118.5h6M7 118.5h3M22 118.5h4M0 120.5h6M7 120.5h3M25 120.5h4M0 122.5h6M7 122.5h3M22 122.5h4M0 124.5h6M7 124.5h3M28 124.5h4M0 126.5h6M7 126.5h3M33 126.5h4M0 128.5h6M7 128.5h3M29 128.5h3M40 128.5h3M0 130.5h6M7 130.5h3M33 130.5h4M0 132.5h6M0 134.5h6M7 134.5h3M25 134.5h4M0 136.5h6M0 138.5h6M0 140.5h6M7 140.5h4M28 140.5h4M0 142.5h6M0 146.5h5M7 146.5h4M0 170.5h6M0 172.5h5M7 172.5h4M22 172.5h4M2 174.5h3M11 174.5h1M2 176.5h4M15 176.5h1M0 190.5h6M0 194.5h6M0 196.5h6M7 196.5h3M22 196.5h4M0 198.5h6M7 198.5h3M21 198.5h4M0 200.5h5M7 200.5h4M28 200.5h4M2 202.5h3M10 202.5h1M6 206.5h1M0 212.5h6M0 216.5h6M0 218.5h5M7 218.5h6M51 218.5h1M0 244.5h4M25 244.5h3M7 246.5h1M2 250.5h6M0 254.5h6M0 258.5h4M20 258.5h4M2 260.5h3M18 260.5h1M3 262.5h4M0 268.5h6M0 272.5h6M0 276.5h6M0 280.5h6M0 284.5h6M0 288.5h6M0 292.5h6M14 294.5h1M16 294.5h1M0 296.5h5M6 296.5h7M14 298.5h1M16 298.5h1M0 300.5h5M6 300.5h7M14 302.5h1M16 302.5h1M0 304.5h6M0 308.5h6M2 310.5h2M0 314.5h6M0 318.5h6M4 320.5h4M0 326.5h6M0 330.5h6M0 332.5h6M2 334.5h3M2 336.5h8M2 338.5h6M6 342.5h1M20 342.5h1M2 344.5h2M10 344.5h1M4 346.5h6M22 346.5h1M20 348.5h1M4 350.5h2M12 352.5h1M16 352.5h2M25 352.5h1M30 352.5h2M40 352.5h2M20 358.5h2M56 358.5h1M68 358.5h1M6 360.5h4M4 366.5h4M14 372.5h1M0 374.5h6M0 376.5h6M0 380.5h6M0 386.5h6M0 390.5h6M0 396.5h6M0 400.5h6M2 402.5h2M6 402.5h1M4 406.5h4M4 410.5h3M17 410.5h3M27 410.5h4M0 416.5h6M0 420.5h3M5 420.5h7M37 420.5h2M42 420.5h7M2 422.5h3M15 422.5h3M25 422.5h4M2 424.5h4M7 424.5h1M10 426.5h1M10 428.5h1M0 432.5h6M0 436.5h6M0 440.5h6M0 444.5h6M0 448.5h6M2 452.5h6M9 452.5h4M29 452.5h4M0 454.5h6M0 458.5h6M0 462.5h6M0 466.5h6M0 470.5h3M5 470.5h7M35 470.5h2M38 470.5h8M0 474.5h6M0 478.5h6M0 482.5h6M0 486.5h6M0 490.5h6M0 494.5h6M0 498.5h6M0 502.5h6M0 506.5h6M0 510.5h6M0 514.5h6M0 516.5h6M0 520.5h6M0 524.5h6M0 528.5h6M0 532.5h6M0 536.5h6M0 540.5h6M2 542.5h2M4 546.5h4M0 554.5h6"/><path stroke="#98c379" d="M9 0.5h13M9 2.5h14M9 4.5h15M9 6.5h13M9 8.5h10M9 10.5h9M9 12.5h10M9 14.5h10M9 18.5h12M9 24.5h9M9 32.5h12M9 42.5h11M9 44.5h7M9 54.5h8M9 62.5h14M9 68.5h12M9 70.5h8M9 72.5h12M9 76.5h15M9 82.5h19M9 88.5h27M9 96.5h11M9 104.5h13M10 148.5h4M10 150.5h44M10 152.5h3M17 152.5h7M25 152.5h2M28 152.5h4M33 152.5h8M47 152.5h2M10 154.5h3M14 154.5h8M24 154.5h3M28 154.5h9M38 154.5h13M52 154.5h2M10 156.5h3M52 156.5h2M10 158.5h3M19 158.5h8M28 158.5h4M33 158.5h8M42 158.5h5M52 158.5h2M10 160.5h3M17 160.5h5M25 160.5h6M37 160.5h6M10 162.5h44M10 164.5h4M6 178.5h15M6 180.5h16M6 182.5h16M9 204.5h22M8 222.5h9M8 224.5h10M8 232.5h9M8 234.5h9M14 270.5h6M19 312.5h12M33 312.5h7M19 316.5h13M34 316.5h9M11 322.5h28M13 356.5h43M61 356.5h1M58 358.5h9M70 358.5h6M13 362.5h36M11 368.5h19M11 404.5h16M11 408.5h15M12 426.5h4M12 428.5h14M11 544.5h16M11 548.5h22M33 550.5h17"/><path stroke="#61afef" d="M7 22.5h26M7 30.5h25M7 38.5h21M7 40.5h25M7 52.5h21M7 60.5h21M7 74.5h33M7 80.5h20M7 86.5h28M7 94.5h20M7 102.5h27M11 112.5h15M11 114.5h7M11 116.5h8M11 118.5h10M11 120.5h13M11 122.5h11M11 124.5h16M11 126.5h21M11 128.5h17M11 130.5h21M7 132.5h24M11 134.5h13M7 138.5h23M12 140.5h15M12 146.5h12M2 148.5h6M2 150.5h6M2 152.5h6M2 154.5h6M2 156.5h6M2 158.5h6M2 160.5h6M2 162.5h6M2 164.5h6M7 170.5h20M12 172.5h10M2 186.5h17M7 194.5h27M11 196.5h11M11 198.5h9M12 200.5h15M2 204.5h6M8 206.5h10M2 208.5h11M7 216.5h33M5 244.5h19M9 246.5h10M5 258.5h14M2 266.5h12M7 268.5h26M2 270.5h11M7 276.5h20M2 278.5h7M7 284.5h21M2 286.5h8M7 292.5h21M17 294.5h15M14 296.5h21M17 298.5h15M14 300.5h22M17 302.5h15M7 308.5h25M4 312.5h14M7 314.5h31M4 316.5h14M4 322.5h6M7 330.5h21M7 332.5h25M8 342.5h11M8 348.5h11M6 354.5h29M6 356.5h6M23 358.5h29M6 362.5h6M4 368.5h6M2 372.5h11M7 380.5h23M2 384.5h14M7 390.5h27M2 394.5h9M7 400.5h16M7 402.5h6M4 404.5h6M4 408.5h6M8 410.5h8M4 412.5h8M13 420.5h22M50 420.5h16M6 422.5h9M2 430.5h8M7 436.5h20M2 438.5h20M7 444.5h33M2 446.5h15M14 452.5h14M7 454.5h18M2 456.5h14M7 462.5h20M2 464.5h20M13 470.5h20M47 470.5h23M2 472.5h23M7 478.5h18M2 480.5h9M7 486.5h21M2 488.5h12M7 494.5h18M2 496.5h10M7 502.5h20M2 504.5h9M7 510.5h24M2 512.5h12M7 516.5h20M2 518.5h14M7 524.5h28M2 526.5h24M7 532.5h24M2 534.5h20M7 540.5h27M6 542.5h8M4 544.5h6M4 548.5h6M4 550.5h11M2 562.5h11"/><path stroke="#abb2bf" d="M31 112.5h1M23 114.5h5M34 114.5h8M24 116.5h1M26 118.5h1M29 120.5h1M26 122.5h2M32 124.5h1M37 126.5h1M33 128.5h5M44 128.5h8M37 130.5h1M29 134.5h1M32 140.5h1M24 146.5h4M8 148.5h1M16 148.5h2M8 150.5h1M58 150.5h3M8 152.5h1M53 152.5h2M56 152.5h24M8 154.5h1M58 154.5h3M8 156.5h1M58 156.5h3M8 158.5h1M58 158.5h3M8 160.5h1M45 160.5h1M47 160.5h8M56 160.5h10M8 162.5h1M58 162.5h3M8 164.5h1M16 164.5h2M0 166.5h1M26 172.5h3M6 174.5h4M14 174.5h1M7 176.5h7M17 176.5h1M21 178.5h1M22 180.5h1M22 182.5h1M2 184.5h2M19 186.5h1M21 186.5h1M23 186.5h6M0 188.5h1M26 196.5h2M25 198.5h1M33 200.5h5M39 200.5h1M6 202.5h3M13 202.5h1M8 204.5h1M33 204.5h3M2 206.5h3M18 206.5h3M13 208.5h1M18 208.5h2M0 210.5h1M14 218.5h16M31 218.5h19M53 218.5h1M4 220.5h1M17 222.5h1M18 224.5h1M9 226.5h1M4 228.5h2M4 230.5h1M17 232.5h1M17 234.5h1M9 236.5h1M4 238.5h2M0 240.5h2M29 244.5h4M33 244.5h1M35 244.5h1M2 246.5h4M19 246.5h20M9 250.5h18M0 252.5h1M25 258.5h7M33 258.5h1M6 260.5h11M21 260.5h1M2 262.5h1M7 262.5h7M14 266.5h3M13 270.5h1M20 270.5h2M9 278.5h1M11 278.5h1M17 278.5h2M10 286.5h3M2 294.5h11M32 294.5h1M34 294.5h2M13 296.5h1M35 296.5h1M2 298.5h11M32 298.5h3M13 300.5h1M36 300.5h1M2 302.5h11M32 302.5h3M5 310.5h1M6 310.5h11M17 310.5h1M19 310.5h1M18 312.5h1M31 312.5h1M40 312.5h1M46 312.5h2M18 316.5h1M32 316.5h1M43 316.5h1M49 316.5h2M2 320.5h1M9 320.5h1M10 322.5h1M42 322.5h2M2 324.5h1M6 334.5h4M11 336.5h6M9 338.5h8M2 342.5h3M19 342.5h1M21 342.5h5M5 344.5h4M13 344.5h1M15 344.5h1M11 346.5h6M18 346.5h3M19 348.5h1M21 348.5h3M26 348.5h24M52 348.5h21M73 348.5h1M7 350.5h4M12 350.5h1M6 352.5h5M14 352.5h2M22 352.5h1M24 352.5h1M28 352.5h1M28 352.5h2M36 352.5h1M38 352.5h1M44 352.5h2M35 354.5h1M36 354.5h6M42 354.5h1M12 356.5h1M63 356.5h1M64 356.5h4M13 358.5h6M52 358.5h3M76 358.5h2M4 360.5h1M11 360.5h1M12 362.5h1M51 362.5h3M4 364.5h1M2 366.5h1M9 366.5h1M10 368.5h1M32 368.5h2M2 370.5h1M13 372.5h1M15 372.5h5M16 384.5h3M11 394.5h3M5 402.5h1M13 402.5h25M38 402.5h1M39 402.5h1M10 404.5h1M31 404.5h2M34 404.5h18M2 406.5h1M9 406.5h1M10 408.5h1M28 408.5h3M16 410.5h1M21 410.5h5M32 410.5h8M12 412.5h1M14 412.5h1M20 412.5h2M2 414.5h1M4 420.5h1M12 420.5h1M35 420.5h1M40 420.5h2M49 420.5h1M66 420.5h1M15 422.5h1M19 422.5h5M30 422.5h8M12 424.5h2M15 424.5h1M6 426.5h1M8 426.5h1M16 426.5h1M6 428.5h1M8 428.5h1M26 428.5h1M10 430.5h1M12 430.5h1M14 430.5h6M22 438.5h3M17 446.5h3M28 452.5h1M33 452.5h2M16 456.5h3M22 464.5h1M29 464.5h1M31 464.5h24M55 464.5h1M60 464.5h2M4 470.5h1M12 470.5h1M33 470.5h1M46 470.5h1M70 470.5h1M25 472.5h3M11 480.5h3M14 488.5h3M12 496.5h3M11 504.5h3M14 512.5h3M16 518.5h3M26 526.5h3M22 534.5h3M5 542.5h1M14 542.5h3M18 542.5h1M10 544.5h1M29 544.5h3M2 546.5h1M9 546.5h1M10 548.5h1M35 548.5h3M15 550.5h1M16 550.5h16M50 550.5h1M56 550.5h1M62 550.5h1M65 550.5h1M71 550.5h1M2 552.5h1M13 562.5h1M18 562.5h2M0 564.5h1"/><path stroke="#d19a66" d="M42 152.5h5M22 160.5h2M31 160.5h2M13 174.5h1M20 186.5h1M12 202.5h1M14 208.5h4M8 226.5h1M8 236.5h1M20 260.5h1M10 278.5h1M13 278.5h4M33 294.5h1M42 312.5h4M45 316.5h4M12 344.5h1M22 352.5h2M37 352.5h1M43 352.5h1M56 356.5h5M27 404.5h2M13 412.5h1M16 412.5h4M7 426.5h1M7 428.5h1M11 430.5h1M23 464.5h6M56 464.5h4M52 550.5h4M58 550.5h4M64 550.5h1M67 550.5h4M14 562.5h4"/><path stroke="#56b6c2" d="M14 148.5h2M54 150.5h4M49 152.5h4M54 154.5h4M54 156.5h4M54 158.5h4M43 160.5h2M54 162.5h4M14 164.5h2M31 204.5h2M39 322.5h3M49 362.5h2M30 368.5h2M29 404.5h2M26 408.5h2M27 544.5h2M33 548.5h2"/><path stroke="#e06c75" d="M18 352.5h4M32 352.5h4M8 424.5h4M2 426.5h4M2 428.5h4"/><path stroke="#5c6370" d="M2 382.5h19M2 392.5h20"/></g><g opacity="0.25"><path stroke="#c678dd" d="M0 1.5h8M0 3.5h8M0 5.5h8M0 7.5h8M0 9.5h8M0 11.5h8M0 13.5h8M0 15.5h8M0 19.5h8M0 23.5h6M0 25.5h8M0 27.5h6M0 31.5h6M0 33.5h8M0 35.5h6M0 39.5h6M0 41.5h6M0 43.5h8M0 45.5h8M0 47.5h6M0 49.5h6M0 53.5h6M0 55.5h8M0 57.5h6M0 61.5h6M0 63.5h8M0 65.5h6M0 69.5h8M0 71.5h8M0 73.5h8M0 75.5h6M0 77.5h8M0 79.5h6M0 81.5h6M0 83.5h8M0 85.5h6M0 87.5h6M0 89.5h8M0 91.5h6M0 95.5h6M0 97.5h8M0 99.5h6M0 103.5h6M0 105.5h8M0 107.5h6M0 113.5h6M7 113.5h3M27 113.5h4M0 115.5h6M7 115.5h3M19 115.5h3M30 115.5h3M0 117.5h6M7 117.5h3M20 117.5h4M0 119.5h6M7 119.5h3M22 119.5h4M0 121.5h6M7 121.5h3M25 121.5h4M0 123.5h6M7 123.5h3M22 123.5h4M0 125.5h6M7 125.5h3M28 125.5h4M0 127.5h6M7 127.5h3M33 127.5h4M0 129.5h6M7 129.5h3M29 129.5h3M40 129.5h3M0 131.5h6M7 131.5h3M33 131.5h4M0 133.5h6M0 135.5h6M7 135.5h3M25 135.5h4M0 137.5h6M0 139.5h6M0 141.5h6M7 141.5h4M28 141.5h4M0 143.5h6M0 147.5h5M7 147.5h4M0 171.5h6M0 173.5h5M7 173.5h4M22 173.5h4M2 175.5h3M11 175.5h1M2 177.5h4M15 177.5h1M0 191.5h6M0 195.5h6M0 197.5h6M7 197.5h3M22 197.5h4M0 199.5h6M7 199.5h3M21 199.5h4M0 201.5h5M7 201.5h4M28 201.5h4M2 203.5h3M10 203.5h1M6 207.5h1M0 213.5h6M0 217.5h6M0 219.5h5M7 219.5h6M51 219.5h1M0 245.5h4M25 245.5h3M7 247.5h1M2 251.5h6M0 255.5h6M0 259.5h4M20 259.5h4M2 261.5h3M18 261.5h1M3 263.5h4M0 269.5h6M0 273.5h6M0 277.5h6M0 281.5h6M0 285.5h6M0 289.5h6M0 293.5h6M14 295.5h1M16 295.5h1M0 297.5h5M6 297.5h7M14 299.5h1M16 299.5h1M0 301.5h5M6 301.5h7M14 303.5h1M16 303.5h1M0 305.5h6M0 309.5h6M2 311.5h2M0 315.5h6M0 319.5h6M4 321.5h4M0 327.5h6M0 331.5h6M0 333.5h6M2 335.5h3M2 337.5h8M2 339.5h6M6 343.5h1M20 343.5h1M2 345.5h2M10 345.5h1M4 347.5h6M22 347.5h1M20 349.5h1M4 351.5h2M12 353.5h1M16 353.5h2M25 353.5h1M30 353.5h2M40 353.5h2M20 359.5h2M56 359.5h1M68 359.5h1M6 361.5h4M4 367.5h4M14 373.5h1M0 375.5h6M0 377.5h6M0 381.5h6M0 387.5h6M0 391.5h6M0 397.5h6M0 401.5h6M2 403.5h2M6 403.5h1M4 407.5h4M4 411.5h3M17 411.5h3M27 411.5h4M0 417.5h6M0 421.5h3M5 421.5h7M37 421.5h2M42 421.5h7M2 423.5h3M15 423.5h3M25 423.5h4M2 425.5h4M7 425.5h1M10 427.5h1M10 429.5h1M0 433.5h6M0 437.5h6M0 441.5h6M0 445.5h6M0 449.5h6M2 453.5h6M9 453.5h4M29 453.5h4M0 455.5h6M0 459.5h6M0 463.5h6M0 467.5h6M0 471.5h3M5 471.5h7M35 471.5h2M38 471.5h8M0 475.5h6M0 479.5h6M0 483.5h6M0 487.5h6M0 491.5h6M0 495.5h6M0 499.5h6M0 503.5h6M0 507.5h6M0 511.5h6M0 515.5h6M0 517.5h6M0 521.5h6M0 525.5h6M0 529.5h6M0 533.5h6M0 537.5h6M0 541.5h6M2 543.5h2M4 547.5h4M0 555.5h6"/><path stroke="#98c379" d="M9 1.5h13M9 3.5h14M9 5.5h15M9 7.5h13M9 9.5h10M9 11.5h9M9 13.5h10M9 15.5h10M9 19.5h12M9 25.5h9M9 33.5h12M9 43.5h11M9 45.5h7M9 55.5h8M9 63.5h14M9 69.5h12M9 71.5h8M9 73.5h12M9 77.5h15M9 83.5h19M9 89.5h27M9 97.5h11M9 105.5h13M10 149.5h4M10 151.5h44M10 153.5h3M17 153.5h7M25 153.5h2M28 153.5h4M33 153.5h8M47 153.5h2M10 155.5h3M14 155.5h8M24 155.5h3M28 155.5h9M38 155.5h13M52 155.5h2M10 157.5h3M52 157.5h2M10 159.5h3M19 159.5h8M28 159.5h4M33 159.5h8M42 159.5h5M52 159.5h2M10 161.5h3M17 161.5h5M25 161.5h6M37 161.5h6M10 163.5h44M10 165.5h4M6 179.5h15M6 181.5h16M6 183.5h16M9 205.5h22M8 223.5h9M8 225.5h10M8 233.5h9M8 235.5h9M14 271.5h6M19 313.5h12M33 313.5h7M19 317.5h13M34 317.5h9M11 323.5h28M13 357.5h43M61 357.5h1M58 359.5h9M70 359.5h6M13 363.5h36M11 369.5h19M11 405.5h16M11 409.5h15M12 427.5h4M12 429.5h14M11 545.5h16M11 549.5h22M33 551.5h17"/><path stroke="#61afef" d="M7 23.5h26M7 31.5h25M7 39.5h21M7 41.5h25M7 53.5h21M7 61.5h21M7 75.5h33M7 81.5h20M7 87.5h28M7 95.5h20M7 103.5h27M11 113.5h15M11 115.5h7M11 117.5h8M11 119.5h10M11 121.5h13M11 123.5h11M11 125.5h16M11 127.5h21M11 129.5h17M11 131.5h21M7 133.5h24M11 135.5h13M7 139.5h23M12 141.5h15M12 147.5h12M2 149.5h6M2 151.5h6M2 153.5h6M2 155.5h6M2 157.5h6M2 159.5h6M2 161.5h6M2 163.5h6M2 165.5h6M7 171.5h20M12 173.5h10M2 187.5h17M7 195.5h27M11 197.5h11M11 199.5h9M12 201.5h15M2 205.5h6M8 207.5h10M2 209.5h11M7 217.5h33M5 245.5h19M9 247.5h10M5 259.5h14M2 267.5h12M7 269.5h26M2 271.5h11M7 277.5h20M2 279.5h7M7 285.5h21M2 287.5h8M7 293.5h21M17 295.5h15M14 297.5h21M17 299.5h15M14 301.5h22M17 303.5h15M7 309.5h25M4 313.5h14M7 315.5h31M4 317.5h14M4 323.5h6M7 331.5h21M7 333.5h25M8 343.5h11M8 349.5h11M6 355.5h29M6 357.5h6M23 359.5h29M6 363.5h6M4 369.5h6M2 373.5h11M7 381.5h23M2 385.5h14M7 391.5h27M2 395.5h9M7 401.5h16M7 403.5h6M4 405.5h6M4 409.5h6M8 411.5h8M4 413.5h8M13 421.5h22M50 421.5h16M6 423.5h9M2 431.5h8M7 437.5h20M2 439.5h20M7 445.5h33M2 447.5h15M14 453.5h14M7 455.5h18M2 457.5h14M7 463.5h20M2 465.5h20M13 471.5h20M47 471.5h23M2 473.5h23M7 479.5h18M2 481.5h9M7 487.5h21M2 489.5h12M7 495.5h18M2 497.5h10M7 503.5h20M2 505.5h9M7 511.5h24M2 513.5h12M7 517.5h20M2 519.5h14M7 525.5h28M2 527.5h24M7 533.5h24M2 535.5h20M7 541.5h27M6 543.5h8M4 545.5h6M4 549.5h6M4 551.5h11M2 563.5h11"/><path stroke="#abb2bf" d="M31 113.5h1M23 115.5h5M34 115.5h8M24 117.5h1M26 119.5h1M29 121.5h1M26 123.5h2M32 125.5h1M37 127.5h1M33 129.5h5M44 129.5h8M37 131.5h1M29 135.5h1M32 141.5h1M24 147.5h4M8 149.5h1M16 149.5h2M8 151.5h1M58 151.5h3M8 153.5h1M53 153.5h2M56 153.5h24M8 155.5h1M58 155.5h3M8 157.5h1M58 157.5h3M8 159.5h1M58 159.5h3M8 161.5h1M45 161.5h1M47 161.5h8M56 161.5h10M8 163.5h1M58 163.5h3M8 165.5h1M16 165.5h2M0 167.5h1M26 173.5h3M6 175.5h4M14 175.5h1M7 177.5h7M17 177.5h1M21 179.5h1M22 181.5h1M22 183.5h1M2 185.5h2M19 187.5h1M21 187.5h1M23 187.5h6M0 189.5h1M26 197.5h2M25 199.5h1M33 201.5h5M39 201.5h1M6 203.5h3M13 203.5h1M8 205.5h1M33 205.5h3M2 207.5h3M18 207.5h3M13 209.5h1M18 209.5h2M0 211.5h1M14 219.5h16M31 219.5h19M53 219.5h1M4 221.5h1M17 223.5h1M18 225.5h1M9 227.5h1M4 229.5h2M4 231.5h1M17 233.5h1M17 235.5h1M9 237.5h1M4 239.5h2M0 241.5h2M29 245.5h4M33 245.5h1M35 245.5h1M2 247.5h4M19 247.5h20M9 251.5h18M0 253.5h1M25 259.5h7M33 259.5h1M6 261.5h11M21 261.5h1M2 263.5h1M7 263.5h7M14 267.5h3M13 271.5h1M20 271.5h2M9 279.5h1M11 279.5h1M17 279.5h2M10 287.5h3M2 295.5h11M32 295.5h1M34 295.5h2M13 297.5h1M35 297.5h1M2 299.5h11M32 299.5h3M13 301.5h1M36 301.5h1M2 303.5h11M32 303.5h3M5 311.5h1M6 311.5h11M17 311.5h1M19 311.5h1M18 313.5h1M31 313.5h1M40 313.5h1M46 313.5h2M18 317.5h1M32 317.5h1M43 317.5h1M49 317.5h2M2 321.5h1M9 321.5h1M10 323.5h1M42 323.5h2M2 325.5h1M6 335.5h4M11 337.5h6M9 339.5h8M2 343.5h3M19 343.5h1M21 343.5h5M5 345.5h4M13 345.5h1M15 345.5h1M11 347.5h6M18 347.5h3M19 349.5h1M21 349.5h3M26 349.5h24M52 349.5h21M73 349.5h1M7 351.5h4M12 351.5h1M6 353.5h5M14 353.5h2M22 353.5h1M24 353.5h1M28 353.5h1M28 353.5h2M36 353.5h1M38 353.5h1M44 353.5h2M35 355.5h1M36 355.5h6M42 355.5h1M12 357.5h1M63 357.5h1M64 357.5h4M13 359.5h6M52 359.5h3M76 359.5h2M4 361.5h1M11 361.5h1M12 363.5h1M51 363.5h3M4 365.5h1M2 367.5h1M9 367.5h1M10 369.5h1M32 369.5h2M2 371.5h1M13 373.5h1M15 373.5h5M16 385.5h3M11 395.5h3M5 403.5h1M13 403.5h25M38 403.5h1M39 403.5h1M10 405.5h1M31 405.5h2M34 405.5h18M2 407.5h1M9 407.5h1M10 409.5h1M28 409.5h3M16 411.5h1M21 411.5h5M32 411.5h8M12 413.5h1M14 413.5h1M20 413.5h2M2 415.5h1M4 421.5h1M12 421.5h1M35 421.5h1M40 421.5h2M49 421.5h1M66 421.5h1M15 423.5h1M19 423.5h5M30 423.5h8M12 425.5h2M15 425.5h1M6 427.5h1M8 427.5h1M16 427.5h1M6 429.5h1M8 429.5h1M26 429.5h1M10 431.5h1M12 431.5h1M14 431.5h6M22 439.5h3M17 447.5h3M28 453.5h1M33 453.5h2M16 457.5h3M22 465.5h1M29 465.5h1M31 465.5h24M55 465.5h1M60 465.5h2M4 471.5h1M12 471.5h1M33 471.5h1M46 471.5h1M70 471.5h1M25 473.5h3M11 481.5h3M14 489.5h3M12 497.5h3M11 505.5h3M14 513.5h3M16 519.5h3M26 527.5h3M22 535.5h3M5 543.5h1M14 543.5h3M18 543.5h1M10 545.5h1M29 545.5h3M2 547.5h1M9 547.5h1M10 549.5h1M35 549.5h3M15 551.5h1M16 551.5h16M50 551.5h1M56 551.5h1M62 551.5h1M65 551.5h1M71 551.5h1M2 553.5h1M13 563.5h1M18 563.5h2M0 565.5h1"/><path stroke="#d19a66" d="M42 153.5h5M22 161.5h2M31 161.5h2M13 175.5h1M20 187.5h1M12 203.5h1M14 209.5h4M8 227.5h1M8 237.5h1M20 261.5h1M10 279.5h1M13 279.5h4M33 295.5h1M42 313.5h4M45 317.5h4M12 345.5h1M22 353.5h2M37 353.5h1M43 353.5h1M56 357.5h5M27 405.5h2M13 413.5h1M16 413.5h4M7 427.5h1M7 429.5h1M11 431.5h1M23 465.5h6M56 465.5h4M52 551.5h4M58 551.5h4M64 551.5h1M67 551.5h4M14 563.5h4"/><path stroke="#56b6c2" d="M14 149.5h2M54 151.5h4M49 153.5h4M54 155.5h4M54 157.5h4M54 159.5h4M43 161.5h2M54 163.5h4M14 165.5h2M31 205.5h2M39 323.5h3M49 363.5h2M30 369.5h2M29 405.5h2M26 409.5h2M27 545.5h2M33 549.5h2"/><path stroke="#e06c75" d="M18 353.5h4M32 353.5h4M8 425.5h4M2 427.5h4M2 429.5h4"/><path stroke="#5c6370" d="M2 383.5h19M2 393.5h20"/></g></svg><div class="abs" style="left:961px;top:75px;width:2px;height:4px;background:#5d8a06"></div>
<div class="abs" style="left:1063px;top:57px;width:1px;height:647px;background:#353a45"></div>
<div class="abs" style="left:1064px;top:57px;width:13px;height:66px;background:#3b404c"></div>
<div class="abs" style="left:1064px;top:74px;width:13px;height:2px;background:#4f6ba8"></div>
<div class="abs" style="left:1064px;top:76px;width:4px;height:4px;background:#54703a"></div>
</div>
<div id="panel" class="abs">
<div class="abs" style="left:20px;top:9px;height:20px;line-height:20px;font-size:11px;color:#8b919d;white-space:nowrap">问题</div>
<div class="abs" style="left:66px;top:9px;height:20px;line-height:20px;font-size:11px;color:#8b919d;white-space:nowrap">输出</div>
<div class="abs" style="left:112px;top:9px;height:20px;line-height:20px;font-size:11px;color:#8b919d;white-space:nowrap">调试控制台</div>
<div class="abs" style="left:190px;top:9px;height:20px;line-height:20px;font-size:11px;color:#d7dae0;white-space:nowrap">终端</div>
<div class="abs" style="left:189px;top:30px;width:26px;height:1px;background:#d7dae0"></div>
<div class="tl mono" style="top:47px;">Dragon execute image.cfg SUCCESS !</div>
<div class="tl mono" style="top:64px;">-----------rtos_freertos_r128s2_module_uart0_16Mnor.img----------------</div>
<div class="tl mono" style="top:81px;">----------image is for nor----------</div>
<div class="tl mono" style="top:98px;">----------image is at----------</div>
<div class="tl mono" style="top:132px;color:#f25c5c;font-weight:bold">/home/yuzuki/WorkSpace/R128-FreeRTOS/out/r128s2/module/rtos_freertos_r128s2_module_uart0_16Mnor.img</div>
<div class="tl mono" style="top:166px;">pack finish</div>
<div class="tl mono" style="top:183px"><span style="color:#22c98a;font-weight:bold">yuzuki@YuzukiKoddo</span>:<span style="color:#4d8ef2;font-weight:bold">~/WorkSpace/R128-FreeRTOS</span>$ </div>
<div class="abs" style="left:388px;top:184px;width:8px;height:16px;border:1px solid #d7dae0"></div>
<div class="abs" style="left:5px;top:188px;width:8px;height:8px;border:1px solid #6b717d;border-radius:50%"></div>
<svg class="abs" style="left:766px;top:12px" width="12" height="12" viewBox="0 0 12 12"><path d="M6 0V12M0 6H12" stroke="#d7dae0" stroke-width="1.100"/></svg>
<svg class="abs" style="left:784px;top:16px" width="8" height="5" viewBox="0 0 8 5"><path d="M0.500 0.500L4 4L7.500 0.500" fill="none" stroke="#d7dae0" stroke-width="1"/></svg>
<svg class="abs" style="left:804px;top:10px" width="14" height="16" viewBox="0 0 14 16" fill="none" stroke="#d7dae0" stroke-width="1"><path d="M7 0.700L13.300 3.700V11.300L7 15.300L0.700 11.300V3.700Z"/><path d="M7 15V7.500L13 3.900" /><path d="M8.500 8.500l3-1.800v5l-3 1.800z" fill="#d7dae0"/></svg>
<div class="abs" style="left:824px;top:8px;height:20px;line-height:20px;font-size:11px;color:#d7dae0;white-space:nowrap;letter-spacing:-0.399px">bash - R128-FreeRTOS</div>
<svg class="abs" style="left:944px;top:11.500px" width="13" height="13" viewBox="0 0 13 13" fill="none" stroke="#d7dae0" stroke-width="1.100"><rect x="0.550" y="0.550" width="11.900" height="11.900" rx="0.800"/><path d="M6.500 0.500V12.500"/></svg>
<svg class="abs" style="left:970px;top:11px" width="12" height="14" viewBox="0 0 12 14" fill="none" stroke="#d7dae0" stroke-width="1.100"><path d="M0.500 2.800H11.500M4 2.500V0.800H8V2.500M1.800 3V12.300a1 1 0 0 0 1 1H9.200a1 1 0 0 0 1-1V3M4.300 5V11M6 5V11M7.700 5V11"/></svg>
<svg class="abs" style="left:996px;top:16.500px" width="12" height="3" viewBox="0 0 12 3"><circle cx="1.200" cy="1.500" r="1.100" fill="#d7dae0"/><circle cx="6" cy="1.500" r="1.100" fill="#d7dae0"/><circle cx="10.800" cy="1.500" r="1.100" fill="#d7dae0"/></svg>
<svg class="abs" style="left:1023px;top:14px" width="11" height="7" viewBox="0 0 11 7"><path d="M0.700 6.100L5.500 1.300L10.300 6.100" fill="none" stroke="#d7dae0" stroke-width="1.200"/></svg>
<svg class="abs" style="left:1049px;top:13px" width="9" height="9" viewBox="0 0 9 9"><path d="M0.500 0.500L8.500 8.500M8.500 0.500L0.500 8.500" stroke="#d7dae0" stroke-width="1.200"/></svg>
<div class="abs" style="left:1074px;top:71px;width:3px;height:6px;background:#e8494b"></div>
<div class="abs" style="left:1074px;top:138px;width:3px;height:6px;background:#e8494b"></div>
<div class="abs" style="left:1067px;top:130px;width:3px;height:6px;background:#2488b8"></div>
<div class="abs" style="left:1067px;top:197px;width:3px;height:4px;background:#6b717d"></div>
</div>
<div id="status" class="abs">
<div class="abs" style="left:0;top:0;width:139px;height:22px;background:#528bff"></div>
<svg class="abs" style="left:0;top:0" width="30" height="22" viewBox="0 0 30 22"><path d="M13.200 8.300L17.300 12.300L13.200 16.400M21.400 4.900L17.800 8.600L21.400 12.300" fill="none" stroke="#fff" stroke-width="1.100"/></svg>
<div class="i" style="left:28px;color:#fff;letter-spacing:-0.236px">WSL: Ubuntu-22.04</div>
<svg class="abs" style="left:148px;top:4px" width="8" height="14" viewBox="0 0 8 14" fill="none" stroke="#9da5b4" stroke-width="1.100"><circle cx="4" cy="7" r="2.800"/><path d="M4 0V4.200M4 9.800V14"/></svg>
<div class="i" style="left:163px">13a47b87+</div>
<svg class="abs" style="left:229px;top:5px" width="14" height="12" viewBox="0 0 14 12" fill="none" stroke="#9da5b4" stroke-width="1.100"><path d="M1.500 7A5.500 5 0 0 1 11.500 3.500M12.500 5A5.500 5 0 0 1 2.500 8.500M11.800 0.800V3.800H8.800M2.200 11.200V8.200H5.200"/></svg>
<svg class="abs" style="left:257px;top:5px" width="12" height="12" viewBox="0 0 12 12" fill="none" stroke="#9da5b4" stroke-width="1"><circle cx="6" cy="6" r="5.400"/><path d="M3.800 3.800L8.200 8.200M8.200 3.800L3.800 8.200"/></svg>
<div class="i" style="left:273px">0</div>
<svg class="abs" style="left:284px;top:5px" width="13" height="12" viewBox="0 0 13 12" fill="none" stroke="#9da5b4" stroke-width="1"><path d="M6.500 0.800L12.300 11.200H0.700Z"/><path d="M6.500 4.500V8M6.500 9V10"/></svg>
<div class="i" style="left:301px">0</div>
<div class="i" style="left:1170px">行 10，列 22</div>
<div class="i" style="left:1254px">空格: 4</div>
<div class="i" style="left:1307px">UTF-8</div>
<div class="i" style="left:1355px">LF</div>
<div class="i" style="left:1382px">C</div>
<svg class="abs" style="left:1407px;top:4px" width="12" height="14" viewBox="0 0 12 14" fill="none" stroke="#9da5b4" stroke-width="1.100"><path d="M1 10.500H11L9.800 8.500V5.500A3.800 3.800 0 0 0 2.200 5.500V8.500ZM4.800 11A1.300 1.300 0 0 0 7.200 11"/></svg>
</div>
</body></html>
